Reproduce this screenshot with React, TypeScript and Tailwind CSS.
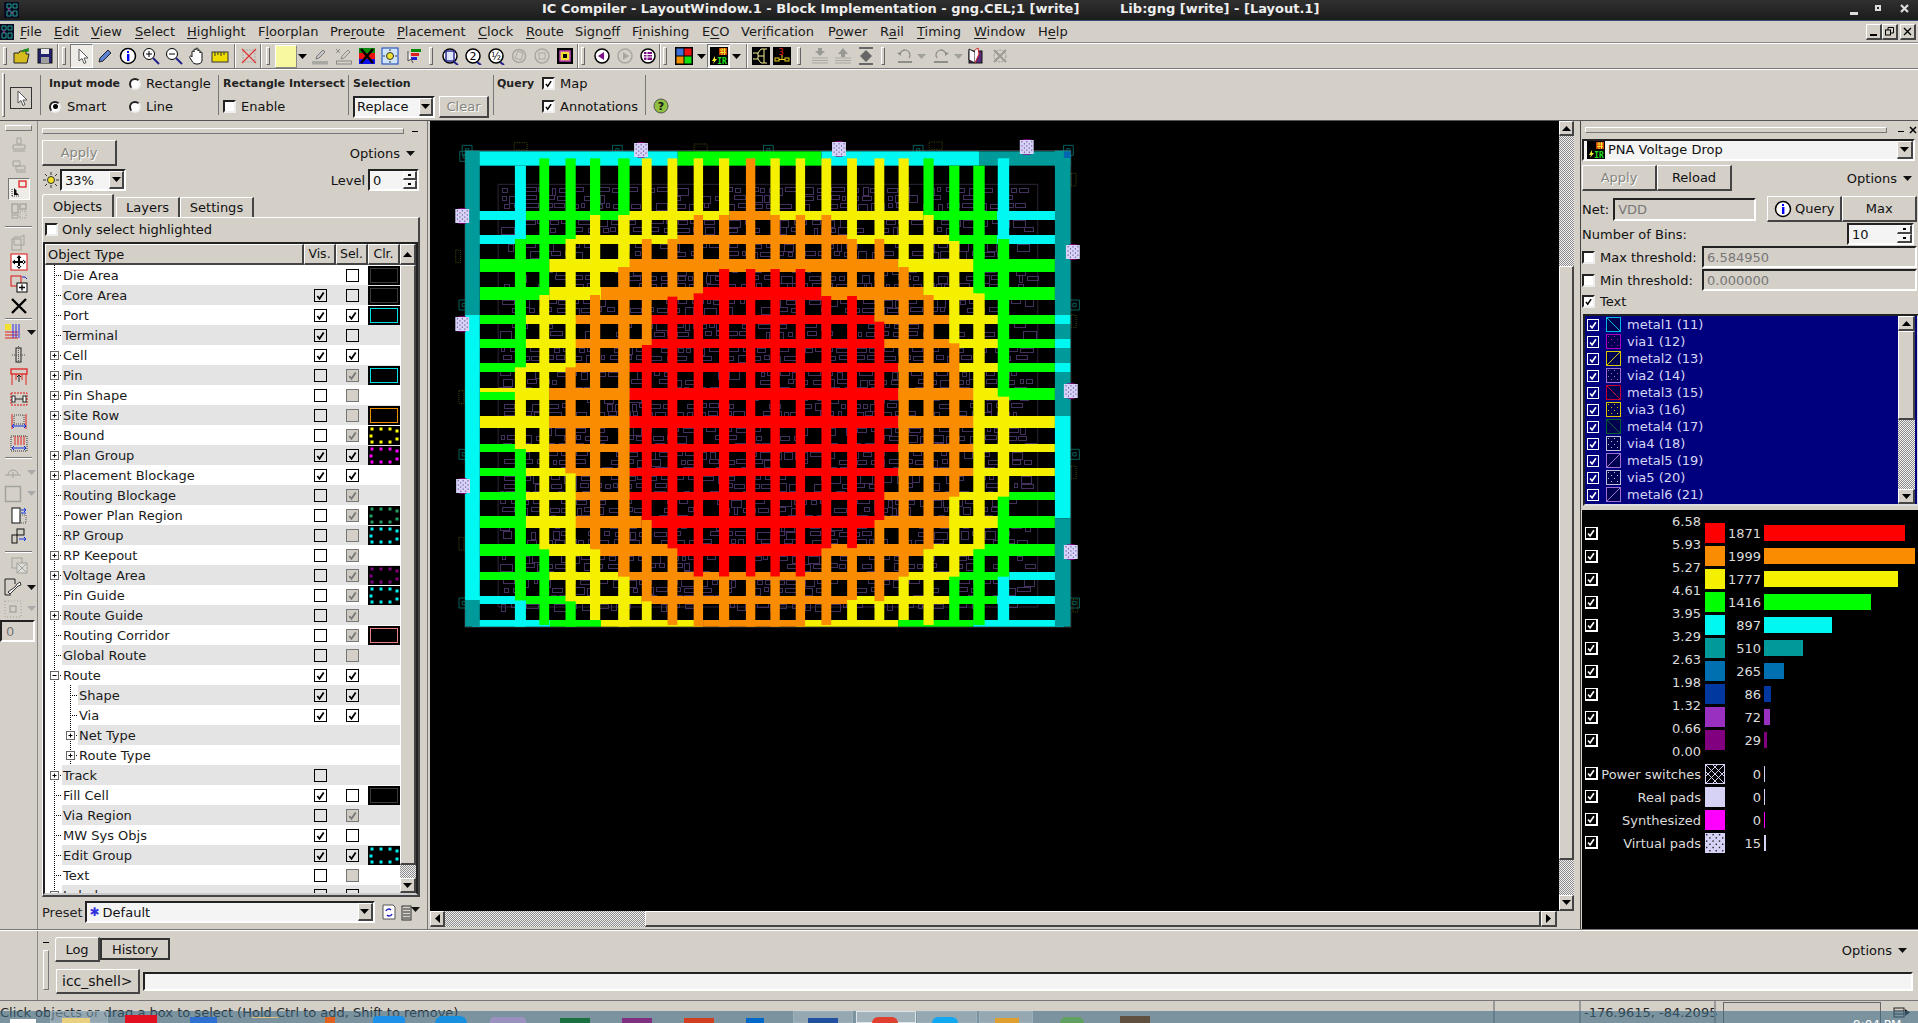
import React from "react";

const C: Record<string, string> = { C: "#00f8f2", T: "#009a9a", G: "#00ff00", Y: "#f4f000", O: "#f98c00", R: "#ff0000" };
type Wire = (string | number)[];
const HW: Wire[] = [
  [64, 107, 54, "C", 558, "G", 910, "C", 1296, "T", 1520],
  [243, 270, 54, "C", 185, "G", 435, "Y", 685, "O", 785, "Y", 1160, "G", 1340, "C", 1504],
  [315, 342, 54, "C", 185, "G", 305, "Y", 558, "O", 975, "Y", 1225, "G", 1340, "C", 1504],
  [387, 426, 73, "G", 243, "Y", 435, "O", 1098, "Y", 1290, "G", 1482],
  [471, 510, 73, "G", 243, "Y", 370, "O", 620, "R", 910, "O", 1160, "Y", 1290, "G", 1482],
  [555, 582, 73, "G", 184, "Y", 306, "O", 492, "R", 1040, "O", 1225, "Y", 1347, "G", 1482],
  [627, 654, 73, "G", 184, "Y", 306, "O", 492, "R", 1062, "O", 1225, "Y", 1347, "G", 1482],
  [699, 726, 73, "G", 184, "Y", 306, "O", 435, "R", 1098, "O", 1247, "Y", 1347, "G", 1482],
  [774, 786, 73, "Y", 160, "Y", 243, "O", 435, "R", 1098, "O", 1289, "Y", 1347, "G", 1482],
  [786, 810, 73, "G", 160, "Y", 243, "O", 435, "R", 1098, "O", 1289, "Y", 1347, "G", 1482],
  [858, 894, 73, "Y", 243, "O", 435, "R", 1098, "O", 1289, "Y", 1482],
  [942, 966, 73, "G", 160, "Y", 243, "O", 435, "R", 1098, "O", 1289, "Y", 1482],
  [1014, 1038, 73, "G", 184, "Y", 284, "O", 435, "R", 1098, "O", 1289, "Y", 1482],
  [1086, 1110, 73, "G", 184, "Y", 306, "O", 435, "R", 1062, "O", 1247, "Y", 1370, "G", 1482],
  [1158, 1194, 73, "G", 184, "Y", 306, "O", 470, "R", 1062, "O", 1225, "Y", 1347, "G", 1482],
  [1242, 1278, 73, "G", 220, "Y", 348, "O", 535, "R", 933, "O", 1160, "Y", 1285, "G", 1482],
  [1326, 1350, 73, "G", 243, "Y", 412, "O", 1120, "Y", 1247, "G", 1370, "C", 1504],
  [1398, 1422, 54, "C", 185, "G", 284, "Y", 470, "O", 975, "Y", 1225, "G", 1340, "C", 1504],
  [1470, 1490, 54, "C", 245, "G", 370, "Y", 620, "O", 848, "Y", 1098, "G", 1282, "C", 1504],
];
const VW: Wire[] = [
  [159, 186, 107, "C", 327, "G", 712, "Y", 957, "G", 1412, "C", 1490],
  [219, 243, 85, "G", 495, "Y", 1258, "G", 1485],
  [283, 308, 85, "G", 327, "Y", 712, "O", 1030, "Y", 1414, "G", 1490],
  [343, 368, 85, "G", 255, "Y", 495, "O", 1258, "Y", 1470],
  [412, 440, 85, "G", 255, "Y", 411, "O", 1340, "Y", 1490],
  [470, 494, 85, "Y", 327, "O", 645, "R", 1170, "O", 1414, "Y", 1470],
  [533, 557, 85, "Y", 327, "O", 500, "R", 1255, "O", 1485],
  [597, 620, 85, "Y", 255, "O", 490, "R", 1340, "O", 1490],
  [659, 684, 85, "Y", 255, "O", 417, "R", 1340, "O", 1490],
  [725, 748, 85, "O", 417, "R", 1340, "O", 1490],
  [785, 808, 85, "Y", 255, "O", 417, "R", 1340, "O", 1490],
  [847, 870, 85, "Y", 255, "O", 417, "R", 1340, "O", 1490],
  [910, 934, 85, "Y", 255, "O", 498, "R", 1255, "O", 1485],
  [973, 997, 85, "Y", 327, "O", 498, "R", 1255, "O", 1410, "Y", 1470],
  [1040, 1064, 85, "Y", 327, "O", 575, "R", 1170, "O", 1414, "Y", 1470],
  [1099, 1124, 85, "Y", 411, "O", 1340, "Y", 1470],
  [1160, 1185, 85, "G", 255, "Y", 495, "O", 1258, "Y", 1485],
  [1223, 1248, 107, "G", 333, "Y", 640, "O", 1100, "Y", 1340, "G", 1470],
  [1282, 1310, 107, "G", 490, "Y", 1258, "G", 1485],
  [1342, 1370, 85, "C", 327, "G", 800, "Y", 1100, "G", 1340, "C", 1470],
];
const SIDE: [number, number, number, number, string][] = [
  [37, 62, 36, 493, "T"], [37, 555, 36, 855, "C"], [37, 1410, 36, 80, "T"],
  [1482, 62, 38, 493, "T"], [1482, 555, 38, 27, "C"], [1482, 582, 38, 45, "T"], [1482, 627, 38, 27, "C"], [1482, 654, 38, 45, "T"],
  [1482, 699, 38, 27, "C"], [1482, 726, 38, 132, "T"], [1482, 858, 38, 307, "C"], [1482, 1165, 38, 325, "T"],
];

function mulberry(seed: number) {
  let a = seed;
  return () => {
    a = (a + 0x6d2b79f5) | 0;
    let t = Math.imul(a ^ (a >>> 15), 1 | a);
    t = (t + Math.imul(t ^ (t >>> 7), 61 | t)) ^ t;
    return ((t ^ (t >>> 14)) >>> 0) / 4294967296;
  };
}
const rnd = mulberry(77);
const CELLS: { x: number; y: number; w: number; h: number }[] = [];
for (let y = 172; y < 1425; y += 24) {
  let x = 122 + rnd() * 15;
  while (x < 1415) {
    const w = rnd() < 0.3 ? 8 + rnd() * 6 : 18 + rnd() * 14;
    const h = rnd() < 0.25 ? 22 : 12;
    if (rnd() < 0.75) CELLS.push({ x, y: y + rnd() * 4, w, h });
    x += w + 5 + rnd() * 10;
  }
}

const Pad = ({ x, y }: { x: number; y: number }) => {
  const d: React.ReactNode[] = [];
  for (let i = 0; i < 5; i++)
    for (let j = 0; j < 6; j++)
      if ((i + j) % 2 === 0) d.push(<rect key={`${i}-${j}`} x={x + 4 + i * 6} y={y + 4 + j * 6.2} width={2.5} height={3} fill="#3a2a6a" />);
  return (
    <g>
      <rect x={x + 8} y={y - 2} width={18} height={46} fill="#a000a0" />
      <rect x={x} y={y} width={34} height={42} fill="#d8d2f8" />
      {d}
    </g>
  );
};
const Teal = ({ x, y }: { x: number; y: number }) => (
  <g fill="none" stroke="#00605c" strokeWidth={1}>
    <rect x={x} y={y} width={24} height={30} vectorEffect="non-scaling-stroke" />
    <rect x={x + 8} y={y + 10} width={8} height={10} vectorEffect="non-scaling-stroke" />
  </g>
);
const Dots = ({ x, y, v }: { x: number; y: number; v?: boolean }) => (
  <rect x={x} y={y} width={v ? 12 : 32} height={v ? 38 : 22} fill="none" stroke="#5c5c10" strokeWidth={2} strokeDasharray="3 3" />
);

function HeatMap() {
  const out: React.ReactNode[] = [];
  HW.forEach((w, i) => {
    const [y1, y2] = w as number[];
    let x = w[2] as number;
    for (let k = 3; k < w.length; k += 2) {
      const nx = w[k + 1] as number;
      out.push(<rect key={`h${i}-${k}`} x={x} y={y1} width={nx - x} height={y2 - y1} fill={C[w[k] as string]} />);
      x = nx;
    }
  });
  SIDE.forEach((s, i) => out.push(<rect key={`s${i}`} x={s[0]} y={s[1]} width={s[2]} height={s[3]} fill={C[s[4]]} />));
  VW.forEach((w, i) => {
    const [x1, x2] = w as number[];
    let y = w[2] as number;
    for (let k = 3; k < w.length; k += 2) {
      const ny = w[k + 1] as number;
      out.push(<rect key={`v${i}-${k}`} x={x1} y={y} width={x2 - x1} height={ny - y} fill={C[w[k] as string]} />);
      y = ny;
    }
  });
  return (
    <svg width={640} height={520} viewBox="0 0 1568 1560" preserveAspectRatio="none" className="block shrink-0">
      {[[30, 46], [398, 46], [768, 46], [1135, 46], [1503, 46], [24, 64], [22, 510], [22, 958], [22, 1404], [1518, 510], [1518, 958], [1518, 1404]].map(([x, y], i) => (
        <Teal key={i} x={x} y={y} />
      ))}
      {[[157, 38], [598, 42], [1174, 36]].map(([x, y], i) => <Dots key={i} x={x} y={y} />)}
      {[[14, 360], [1522, 130], [1522, 555], [22, 782], [1522, 1008], [22, 1222], [1526, 1408]].map(([x, y], i) => <Dots key={i} x={x} y={y} v />)}
      <rect x={118} y={163} width={1322} height={1268} fill="none" stroke="#2e2338" strokeWidth={1} vectorEffect="non-scaling-stroke" />
      {CELLS.map((c, i) => (
        <rect key={i} x={c.x} y={c.y} width={c.w} height={c.h} fill="none" stroke="#44305e" strokeWidth={1} vectorEffect="non-scaling-stroke" shapeRendering="crispEdges" />
      ))}
      <rect x={37} y={62} width={1484} height={1429} fill="none" stroke="#555" strokeWidth={2} />
      {out}
      <rect x={1504} y={64} width={16} height={20} fill="#0066b0" />
      {[[451, 39], [936, 36], [1396, 30], [13, 237], [13, 561], [15, 1047], [1509, 345], [1504, 762], [1504, 1245]].map(([x, y], i) => (
        <Pad key={i} x={x} y={y} />
      ))}
    </svg>
  );
}

const Tri = ({ dir = "down", className = "" }: { dir?: "down" | "up" | "left" | "right"; className?: string }) => {
  const p = { down: "0,1 9,1 4.5,6", up: "0,6 9,6 4.5,1", left: "6,0 6,9 1,4.5", right: "1,0 1,9 6,4.5" }[dir];
  const v = dir === "left" || dir === "right";
  return (
    <svg width={v ? 7 : 9} height={v ? 9 : 7} viewBox={v ? "0 0 7 9" : "0 0 9 7"} className={`block ${className}`}>
      <polygon points={p} fill="currentColor" />
    </svg>
  );
};

const raised = "border border-t-white border-l-white border-r-[#444] border-b-[#444] border-r-2 border-b-2";
const sunken = "border-2 border-t-[#222] border-l-[#222] border-r-white border-b-white";

const ArrowBtn = ({ dir, className = "" }: { dir: "up" | "down" | "left" | "right"; className?: string }) => (
  <div className={`${raised} bg-[#d4d0c8] flex items-center justify-center text-black shrink-0 ${className}`}>
    <Tri dir={dir} />
  </div>
);
const stipple = "bg-[repeating-conic-gradient(#8c8c8c_0%_25%,#f0f0f0_0%_50%)] bg-[length:2px_2px]";

const Grip = ({ className = "h-[20px] w-[7px]" }: { className?: string }) => (
  <div className={`${className} shrink-0 flex items-center justify-center`}>
    <div className="h-[18px] w-[4px] border border-t-white border-l-white border-r-[#666] border-b-[#666]" />
  </div>
);
const HGrip = ({ className = "" }: { className?: string }) => (
  <div className={`h-[6px] border border-t-white border-l-white border-r-[#777] border-b-[#777] ${className}`} />
);

const CheckMark = ({ color = "#000" }: { color?: string }) => (
  <svg viewBox="0 0 12 12" className="w-full h-full block">
    <path d="M2.5 6.5l2.4 3L9.5 2.8" fill="none" stroke={color} strokeWidth={2} />
  </svg>
);
const Check = ({ on, className = "" }: { on?: boolean; className?: string }) => (
  <div className={`w-[13px] h-[13px] shrink-0 bg-white border-2 border-t-[#222] border-l-[#222] border-r-[#eee] border-b-[#eee] ${className}`}>
    {on && <CheckMark />}
  </div>
);
const Radio = ({ on }: { on?: boolean }) => (
  <div className="w-[12px] h-[12px] shrink-0 rounded-full bg-white border-2 border-t-[#222] border-l-[#222] border-r-[#eee] border-b-[#eee] flex items-center justify-center">
    {on && <div className="w-[5px] h-[5px] rounded-full bg-black" />}
  </div>
);

const Ico = ({ n, g }: { n: string; g?: boolean }) => {
  const s: Record<string, React.ReactNode> = {
    open: (<><path d="M1 6h5l1-2h6v3h3l-2 9H1z" fill="#d6bc1e" stroke="#222" /><path d="M9 5c2-3 4-3 6-2M15 1v3h-3" stroke="#1a8a1a" fill="none" strokeWidth={1.5} /></>),
    save: (<><rect x="2" y="2" width="14" height="14" fill="#22226e" stroke="#111" /><rect x="5" y="2" width="8" height="5" fill="#e8e8e8" /><rect x="5" y="10" width="8" height="6" fill="#a0a0a0" /></>),
    cursor: (<path d="M6 2v12l3-2.5 2 5 2-1-2-4.5h4z" fill="#fff" stroke="#555" />),
    pencil: (<><path d="M3 15l1-4 8-8 3 3-8 8z" fill="#5a82d0" stroke="#223" /></>),
    info: (<><circle cx="9" cy="9" r="7.5" fill="#fff" stroke="#000" strokeWidth={1.5} /><rect x="8" y="4" width="2" height="2" fill="#00f" /><rect x="8" y="7" width="2.4" height="7" fill="#00f" /></>),
    zin: (<><circle cx="7" cy="7" r="5.5" fill="#fff" stroke="#000" /><path d="M4 7h6M7 4v6" stroke="#000" /><path d="M11 11l6 6" stroke="#22228a" strokeWidth={2} /></>),
    zout: (<><circle cx="7" cy="7" r="5.5" fill="#fff" stroke="#000" /><path d="M4 7h6" stroke="#000" /><path d="M11 11l6 6" stroke="#22228a" strokeWidth={2} /></>),
    hand: (<path d="M4 9V5a1 1 0 012 0V3a1 1 0 012 0v-1a1 1 0 012 0v2a1 1 0 012 0v2a1 1 0 012 0v7c0 3-2 4-5 4s-4-1-5-3L2 11c-1-2 1-3 2-1z" fill="#fff" stroke="#111" />),
    ruler: (<><rect x="1" y="5" width="16" height="10" fill="#eedc00" stroke="#333" /><path d="M4 5v4M7 5v3M10 5v4M13 5v3" stroke="#333" /></>),
    xred: (<><rect x="3" y="3" width="12" height="12" fill="none" stroke="#aaa" strokeDasharray="2 1" /><path d="M2 2l14 14M16 2L2 16" stroke="#e03030" strokeWidth={1.2} /></>),
    pgray: (<><path d="M5 12l1-3 6-6 2 2-6 6z" fill="#c8c8c8" stroke="#777" /><rect x="1" y="14" width="16" height="3.5" fill="#a8a8a2" /></>),
    pline: (<><path d="M6 12l1-3 6-6 2 2-6 6z" fill="#d4d0c8" stroke="#8a8a84" /><path d="M1 2l4 4M5 2L1 6" stroke="#8a8a84" /><rect x="1.5" y="14" width="15" height="3" fill="none" stroke="#8a8a84" /></>),
    xcolor: (<><rect x="1" y="1" width="16" height="5" fill="#0a8a0a" /><rect x="1" y="6" width="8" height="6" fill="#ee1010" /><rect x="9" y="6" width="8" height="6" fill="#ee1010" /><rect x="1" y="12" width="16" height="5" fill="#1010ee" /><path d="M3 2l12 14M15 2L3 16" stroke="#000" strokeWidth={2.4} /></>),
    sunb: (<><rect x="1" y="1" width="16" height="16" fill="#cfe4f8" stroke="#1040c0" /><circle cx="9" cy="9" r="3.5" fill="#f0e030" stroke="#333" /><path d="M9 2v2M9 14v2M2 9h2M14 9h2" stroke="#333" /></>),
    flag: (<><rect x="6" y="2" width="10" height="3" fill="#0a8a0a" /><rect x="6" y="6" width="8" height="3" fill="#e02020" /><rect x="6" y="10" width="6" height="3" fill="#2020d0" /><path d="M3 4v10l3-2 2 4" fill="#fff" stroke="#444" /></>),
    z1: (<><circle cx="9" cy="9" r="7" fill="#fff" stroke="#000" strokeWidth={1.5} /><rect x="5" y="4" width="8" height="10" fill="#dfe4ff" stroke="#22228a" strokeWidth={1.4} /><path d="M13 15l4 3" stroke="#22228a" strokeWidth={2} /></>),
    z2: (<><circle cx="9" cy="9" r="7" fill="#fff" stroke="#000" strokeWidth={1.5} /><text x="9" y="13" textAnchor="middle" fontSize="11" fill="#000">2</text><path d="M13 15l4 3" stroke="#22228a" strokeWidth={2} /></>),
    z3: (<><circle cx="9" cy="9" r="7" fill="#fff" stroke="#000" strokeWidth={1.5} /><text x="9" y="13" textAnchor="middle" fontSize="10" fill="#000">½</text><path d="M13 15l4 3" stroke="#22228a" strokeWidth={2} /></>),
    zg1: (<><circle cx="9" cy="9" r="6.5" fill="none" stroke="#a8a8a2" strokeWidth={1.5} /><path d="M5 11l3-7 5 2-2 7z" fill="none" stroke="#a8a8a2" /></>),
    zg2: (<><circle cx="9" cy="9" r="7" fill="none" stroke="#a8a8a2" strokeWidth={1.5} /><rect x="6" y="6" width="6" height="6" fill="none" stroke="#a8a8a2" /></>),
    chip: (<><rect x="1" y="1" width="16" height="16" fill="#000" /><rect x="4" y="4" width="10" height="10" fill="#f0e030" stroke="#c040c0" strokeWidth={1.5} /><rect x="7" y="7" width="4" height="4" fill="#000" /></>),
    back: (<><circle cx="9" cy="9" r="7" fill="#fff" stroke="#000" strokeWidth={1.5} /><path d="M5 9l6-4v8z" fill="#80108a" /></>),
    fwd: (<><circle cx="9" cy="9" r="7" fill="none" stroke="#a8a8a2" strokeWidth={1.5} /><path d="M13 9L7 5v8z" fill="#a8a8a2" /></>),
    list: (<><circle cx="9" cy="9" r="7" fill="#fff" stroke="#000" strokeWidth={1.5} /><rect x="5" y="5" width="8" height="8" fill="#80108a" /><path d="M5 7.5h8M5 10h8M8 5v8" stroke="#fff" /></>),
    quad: (<><rect x="0" y="0" width="18" height="18" fill="#000" /><rect x="1.5" y="1.5" width="7" height="7" fill="#3a70d8" /><rect x="9.5" y="1.5" width="7" height="7" fill="#ee1010" /><rect x="1.5" y="9.5" width="7" height="7" fill="#f09000" /><rect x="9.5" y="9.5" width="7" height="7" fill="#10e010" /></>),
    ir: (<><rect x="0" y="0" width="18" height="18" fill="#000" /><rect x="9" y="1" width="8" height="7" fill="#d04000" /><path d="M10 3h6M10 5.5h6M12 1v7M14.5 1v7" stroke="#f0e030" /><path d="M5 9L2 14h2l-1 3 4-5H5z" fill="#f0f030" /><text x="12" y="17" textAnchor="middle" fontSize="8" fontWeight="700" fill="#20e020" fontFamily="DejaVu Sans Mono">IR</text></>),
    net: (<><rect x="0" y="0" width="18" height="18" fill="#000" /><path d="M1 6h5l3-4h6M1 12h5l3 4h6M6 6v6M12 2v14M6 9h6" stroke="#f0f090" fill="none" /></>),
    net3: (<><rect x="0" y="0" width="18" height="18" fill="#000" /><text x="8" y="8" textAnchor="middle" fontSize="8" fill="#f02020">3</text><rect x="2" y="11" width="4" height="3" fill="none" stroke="#f0d020" /><rect x="12" y="11" width="4" height="3" fill="none" stroke="#f0d020" /><path d="M6 12.5h6M9 8v4" stroke="#f0d020" /></>),
    dn: (<><path d="M9 9l-5-5h3V1h4v3h3z" fill="#9a9a94" /><path d="M1 11h16M1 13.5h16M1 16h16" stroke="#a8a8a2" /></>),
    up: (<><path d="M9 1l5 6h-3v3H7V7H4z" fill="#9a9a94" /><path d="M1 11h16M1 13.5h16M1 16h16" stroke="#a8a8a2" /></>),
    top: (<><rect x="2" y="0" width="14" height="2" fill="#666" /><path d="M9 3l6 6H3zM9 15l6-6H3z" fill="#666" /><rect x="2" y="16" width="14" height="2" fill="#666" /></>),
    undo: (<><path d="M4 8a5 5 0 119 3" fill="none" stroke="#8e8e88" strokeWidth={1.3} /><path d="M1 6l4-1 0 4z" fill="#8e8e88" /><path d="M2 15h14" stroke="#8e8e88" strokeWidth={2} /></>),
    redo: (<><path d="M14 8a5 5 0 10-9 3" fill="none" stroke="#8e8e88" strokeWidth={1.3} /><path d="M17 6l-4-1 0 4z" fill="#8e8e88" /><path d="M2 15h14" stroke="#8e8e88" strokeWidth={2} /></>),
    book: (<><rect x="3" y="4" width="13" height="12" fill="#5a2a7a" stroke="#111" /><path d="M3 2l6 3v11l-6-3z" fill="#fff" stroke="#111" /><path d="M9 3l3-2 1 6-4 9" fill="#fff" stroke="#d02020" /></>),
    xg: (<><circle cx="9" cy="9" r="6" fill="none" stroke="#9a9a94" strokeDasharray="2 1" /><path d="M3 3l12 12M15 3L3 15" stroke="#9a9a94" strokeWidth={2} /></>),
    stamp: (<><path d="M7 2h4v6h-4zM3 9h12v4H3zM3 15h12" fill="none" stroke="#a2a29c" /></>),
    stamp2: (<><path d="M3 3h7v5H3zM6 8h9v4H6zM6 14h10" fill="none" stroke="#a2a29c" /></>),
    sel: (<><rect x="9" y="1" width="7" height="6" fill="none" stroke="#e01010" strokeWidth={1.2} /><path d="M2 16V9M2 16h8" stroke="#333" strokeDasharray="1 1" /><path d="M4 8l3 3-1 1 3 3H4z" fill="#111" /></>),
    grid: (<><rect x="2" y="2" width="6" height="9" fill="none" stroke="#a2a29c" strokeWidth={1.3} /><rect x="10" y="2" width="6" height="5" fill="none" stroke="#a2a29c" strokeWidth={1.3} /><rect x="10" y="9" width="6" height="7" fill="none" stroke="#a2a29c" strokeDasharray="1 1" /><rect x="2" y="13" width="6" height="3" fill="none" stroke="#a2a29c" /></>),
    doc: (<><path d="M4 4h7l3-2v10H4z" fill="none" stroke="#a2a29c" /><rect x="2" y="6" width="9" height="11" fill="none" stroke="#a2a29c" /></>),
    move: (<><rect x="1" y="1" width="16" height="16" fill="#fff" stroke="#e01010" /><path d="M9 2l2.5 3h-5zM9 16l2.5-3h-5zM2 9l3-2.5v5zM16 9l-3-2.5v5zM8 4h2v10H8zM4 8h10v2H4z" fill="#000" /></>),
    add: (<><rect x="1" y="1" width="10" height="10" fill="none" stroke="#e01010" /><path d="M12 2h3l2 2" stroke="#2020d0" fill="none" /><rect x="7" y="8" width="10" height="9" fill="#fff" stroke="#000" /><path d="M9 12.5h6M12 9.5v6" stroke="#000" strokeWidth={1.3} /></>),
    x: (<path d="M2 2l14 14M16 2L2 16" stroke="#000" strokeWidth={2.4} />),
    layers: (<><rect x="1" y="1" width="6" height="6" fill="#f0e030" /><path d="M1 9h13M1 12h13M1 15h13" stroke="#e02020" /><path d="M9 1v14M12 1v14M15 1v14" stroke="#3030e0" /></>),
    cut: (<><rect x="6" y="2" width="5" height="14" fill="none" stroke="#222" /><path d="M8.5 0v18M2 9h14" stroke="#555" strokeDasharray="1 1" /></>),
    arch: (<><rect x="1" y="1" width="16" height="5" fill="none" stroke="#e02020" strokeWidth={1.3} /><path d="M2 6v11M16 6v11M6 6v6M12 6v6" stroke="#e02020" /><path d="M9 14V7M7 9l2-2 2 2" stroke="#222" fill="none" /></>),
    gap: (<><rect x="1" y="3" width="16" height="12" fill="none" stroke="#e01010" strokeDasharray="2 1" /><rect x="2" y="6" width="3" height="6" fill="#fff" stroke="#222" /><rect x="13" y="6" width="3" height="6" fill="#fff" stroke="#222" /><path d="M5 9h8" stroke="#222" /></>),
    span: (<><path d="M2 2v15M16 2v15" stroke="#e02020" /><rect x="4" y="3" width="10" height="9" fill="none" stroke="#444" strokeDasharray="1 1" /><path d="M2 14h14M4 12l-2 2 2 2M14 12l2 2-2 2" stroke="#1030e0" fill="none" /></>),
    span2: (<><rect x="1" y="2" width="16" height="15" fill="none" stroke="#333" strokeDasharray="1 1" /><path d="M5 2v9M8 2v9M11 2v9M14 2v9" stroke="#e02020" /><path d="M2 14h14M4 12l-2 2 2 2M14 12l2 2-2 2" stroke="#1030e0" fill="none" /></>),
    rot: (<><path d="M4 12a5 5 0 0110 0" fill="none" stroke="#a2a29c" /><path d="M1 12h16M9 9v6" stroke="#a2a29c" /></>),
    box: (<rect x="1.5" y="1.5" width="15" height="15" fill="none" stroke="#a2a29c" strokeWidth={1.5} />),
    rep: (<><rect x="2" y="2" width="8" height="15" fill="#fff" stroke="#111" /><rect x="10" y="9" width="6" height="8" fill="none" stroke="#555" strokeDasharray="1 1" /><path d="M11 4h5M14 2l2 2-2 2M11 7h5" stroke="#1030e0" fill="none" /></>),
    rep2: (<><rect x="7" y="1" width="7" height="6" fill="none" stroke="#111" /><rect x="2" y="7" width="5" height="8" fill="none" stroke="#111" /><path d="M9 11h7M14 9l2 2-2 2" stroke="#1030e0" fill="none" /></>),
    over: (<><rect x="2" y="2" width="10" height="10" fill="none" stroke="#a2a29c" /><rect x="7" y="7" width="10" height="10" fill="#dcdcd8" stroke="#a2a29c" /><path d="M8 8l8 8M16 8l-8 8" stroke="#a2a29c" /></>),
    wrench: (<><path d="M1 1v16M1 1h10v5M1 17h6" stroke="#222" fill="none" /><path d="M6 16l8-8 3-1-1-3-3 2-2 3-7 5z" fill="#fff" stroke="#333" /></>),
    center: (<><rect x="1" y="1" width="16" height="16" fill="none" stroke="#a2a29c" strokeDasharray="1 2" /><rect x="6" y="6" width="6" height="6" fill="none" stroke="#a2a29c" strokeWidth={1.3} /></>),
    refresh: (<><path d="M5 2h8l2 2v12H3V2z" fill="#fff" stroke="#555" /><path d="M6 8a3 3 0 015-1M12 11a3 3 0 01-5 1" stroke="#2020c0" fill="none" strokeWidth={1.4} /></>),
    menuico: (<><rect x="4" y="3" width="9" height="14" fill="none" stroke="#333" /><path d="M5 6h7M5 9h7M5 12h7M5 15h7" stroke="#333" /></>),
  };
  return (
    <svg width={18} height={18} viewBox="0 0 18 18" className={`block shrink-0 ${g ? "opacity-70" : ""}`}>
      {s[n]}
    </svg>
  );
};
const Slot = ({ n, className = "w-[23px]", active }: { n: string; className?: string; active?: boolean }) => (
  <div className={`h-[24px] flex items-center justify-center shrink-0 ${className} ${active ? "border border-t-[#777] border-l-[#777] border-r-white border-b-white bg-[#eeece6]" : ""}`}>
    <Ico n={n} />
  </div>
);
const DropArrow = ({ className = "w-[12px]", gray }: { className?: string; gray?: boolean }) => (
  <div className={`h-[24px] shrink-0 flex items-center justify-center ${gray ? "text-[#a0a09a]" : "text-black"} ${className}`}>
    <Tri />
  </div>
);
const TSep = ({ className }: { className: string }) => (
  <div className={`h-[24px] shrink-0 flex justify-center ${className}`}>
    <div className="w-[2px] h-full border-l border-l-[#777] border-r border-r-white" />
  </div>
);

const MENU: [string, string, string, string][] = [
  ["", "F", "ile", "w-[34px]"], ["", "E", "dit", "w-[37px]"], ["", "V", "iew", "w-[44px]"], ["", "S", "elect", "w-[52px]"],
  ["", "H", "ighlight", "w-[71px]"], ["F", "l", "oorplan", "w-[72px]"], ["Pre", "r", "oute", "w-[67px]"], ["", "P", "lacement", "w-[81px]"],
  ["", "C", "lock", "w-[48px]"], ["", "R", "oute", "w-[49px]"], ["Sign", "o", "ff", "w-[57px]"], ["F", "i", "nishing", "w-[70px]"],
  ["E", "C", "O", "w-[39px]"], ["Ver", "i", "fication", "w-[87px]"], ["P", "o", "wer", "w-[52px]"], ["R", "a", "il", "w-[37px]"],
  ["", "T", "iming", "w-[57px]"], ["", "W", "indow", "w-[64px]"], ["H", "e", "lp", "w-[40px]"],
];

type Row = { t: string; lvl?: number; exp?: "+" | "-"; v?: "c" | "u"; s?: "c" | "u" | "gc" | "g"; box?: string; dots?: string };
const ROWS: Row[] = [
  { t: "Die Area", s: "u", box: "#3a3a3a" },
  { t: "Core Area", v: "c", s: "u", box: "#3a3a3a" },
  { t: "Port", v: "c", s: "c", box: "#00e0e0" },
  { t: "Terminal", v: "c", s: "u" },
  { t: "Cell", exp: "+", v: "c", s: "c" },
  { t: "Pin", exp: "+", v: "u", s: "gc", box: "#00e0e0" },
  { t: "Pin Shape", exp: "+", v: "u", s: "g" },
  { t: "Site Row", exp: "+", v: "u", s: "g", box: "#f09000" },
  { t: "Bound", v: "u", s: "gc", dots: "#ffff00" },
  { t: "Plan Group", exp: "+", v: "c", s: "c", dots: "#ff00ff" },
  { t: "Placement Blockage", exp: "+", v: "c", s: "c" },
  { t: "Routing Blockage", v: "u", s: "gc" },
  { t: "Power Plan Region", v: "u", s: "gc", dots: "#20a060" },
  { t: "RP Group", v: "u", s: "g", dots: "#00f0f0" },
  { t: "RP Keepout", exp: "+", v: "u", s: "gc" },
  { t: "Voltage Area", exp: "+", v: "u", s: "gc", dots: "#800080" },
  { t: "Pin Guide", v: "u", s: "gc", dots: "#00f0f0" },
  { t: "Route Guide", exp: "+", v: "u", s: "gc" },
  { t: "Routing Corridor", v: "u", s: "gc", box: "#e88080" },
  { t: "Global Route", v: "u", s: "g" },
  { t: "Route", exp: "-", v: "c", s: "c" },
  { t: "Shape", lvl: 1, v: "c", s: "c" },
  { t: "Via", lvl: 1, v: "c", s: "c" },
  { t: "Net Type", lvl: 1, exp: "+" },
  { t: "Route Type", lvl: 1, exp: "+" },
  { t: "Track", exp: "+", v: "u" },
  { t: "Fill Cell", v: "c", s: "u", box: "#3a3a3a" },
  { t: "Via Region", v: "u", s: "gc" },
  { t: "MW Sys Objs", v: "c", s: "u" },
  { t: "Edit Group", v: "c", s: "c", dots: "#00f0f0" },
  { t: "Text", v: "u", s: "g" },
  { t: "Labels", exp: "+", v: "u", s: "u" },
];

const TreeGlyph = ({ lvl, exp }: { lvl: number; exp?: "+" | "-" }) => {
  const w = lvl ? 33 : 17;
  const cx = lvl ? 25 : 9;
  return (
    <svg width={w} height={20} viewBox={`0 0 ${w} 20`} className="block shrink-0">
      <path d="M9.5 0V20" stroke="#000" strokeDasharray="1 1" />
      {lvl ? <path d="M25.5 0V20" stroke="#000" strokeDasharray="1 1" /> : null}
      <path d={`M${cx} 10.5H${w}`} stroke="#000" strokeDasharray="1 1" />
      {exp && (
        <>
          <rect x={cx - 3.5} y={6.5} width={8} height={8} fill="#fff" stroke="#666" />
          <path d={`M${cx - 1.5} 10.5h4`} stroke="#000" />
          {exp === "+" && <path d={`M${cx + 0.5} 8.5v4`} stroke="#000" />}
        </>
      )}
    </svg>
  );
};

const SmallCheck = ({ k }: { k?: string }) => {
  if (!k) return null;
  const gray = k === "g" || k === "gc";
  return (
    <div className={`w-[13px] h-[13px] border ${gray && k === "gc" ? "border-[#777] bg-[#cfcbc3]" : gray ? "border-[#777] bg-[#d4d0c8]" : "border-black"}`}>
      {(k === "c" || k === "gc") && <CheckMark color={k === "c" ? "#000" : "#777"} />}
    </div>
  );
};
const ColorBox = ({ box, dots }: { box?: string; dots?: string }) => {
  if (box) return (
    <div className="w-[32px] h-[19px] bg-black p-[2px] ml-auto">
      <div className="w-full h-full border" style={{ borderColor: box }} />
    </div>
  );
  if (dots) {
    const pts = [[4, 3], [13, 3], [22, 3], [29, 5], [3, 10], [29, 13], [4, 16], [13, 16], [22, 16]];
    return (
      <svg width={32} height={19} viewBox="0 0 32 19" className="block ml-auto">
        <rect width={32} height={19} fill="#000" />
        {pts.map(([x, y], i) => <rect key={i} x={x - 1.5} y={y - 1.5} width={3} height={3} fill={dots} />)}
      </svg>
    );
  }
  return null;
};

function ObjectTable() {
  return (
    <div className="mt-[2px] w-[375px] h-[653px] flex flex-col bg-white border-2 border-t-[#222] border-l-[#222] border-r-[#222] border-b-[#ccc] overflow-hidden">
      <div className="flex flex-1 min-h-0">
        <div className="flex-1 min-w-0 flex flex-col overflow-hidden">
          <div className="flex h-[21px] shrink-0 bg-[#d4d0c8]">
            <div className={`flex-1 ${raised} flex items-center pl-[2px]`}>Object Type</div>
            <div className={`w-[32px] ${raised} flex items-center justify-center text-[12.5px]`}>Vis.</div>
            <div className={`w-[32px] ${raised} flex items-center justify-center text-[12.5px]`}>Sel.</div>
            <div className={`w-[32px] ${raised} flex items-center justify-center text-[12.5px]`}>Clr.</div>
          </div>
          {ROWS.map((r, i) => (
            <div key={r.t} className="flex h-[20px] shrink-0">
              <TreeGlyph lvl={r.lvl ?? 0} exp={r.exp} />
              <div className={`flex-1 flex items-center ${i % 2 ? "bg-[#e4e4e4]" : "bg-white"}`}>
                <div className="flex-1 pl-[1px] text-[#1a1a1a] whitespace-nowrap">{r.t}</div>
                <div className="w-[32px] flex justify-center"><SmallCheck k={r.v} /></div>
                <div className="w-[32px] flex justify-center"><SmallCheck k={r.s} /></div>
                <div className="w-[32px]"><ColorBox box={r.box} dots={r.dots} /></div>
              </div>
            </div>
          ))}
        </div>
        <div className="w-[16px] shrink-0 flex flex-col bg-[#d4d0c8]">
          <ArrowBtn dir="up" className="h-[21px]" />
          <div className={`${raised} h-[600px]`} />
          <div className={`flex-1 ${stipple}`} />
          <ArrowBtn dir="down" className="h-[15px]" />
        </div>
      </div>
    </div>
  );
}

const Options = ({ className = "" }: { className?: string }) => (
  <div className={`flex items-center gap-[6px] ${className}`}>
    <span>Options</span>
    <Tri />
  </div>
);

const RSep = ({ className }: { className: string }) => (
  <div className={`w-[27px] h-[2px] shrink-0 border-t border-t-[#777] border-b border-b-white ${className}`} />
);

function LeftRail() {
  return (
    <div className="w-[38px] shrink-0 border-r border-r-[#888] flex flex-col items-center">
      <HGrip className="w-[27px] mt-[4px] mb-[3px]" />
      <div className="h-[22px] flex items-center"><Ico n="stamp" /></div>
      <div className="h-[22px] flex items-center"><Ico n="stamp2" /></div>
      <div className="h-[22px] w-[22px] flex items-center justify-center bg-[#eeece6] border border-t-[#777] border-l-[#777] border-r-white border-b-white"><Ico n="sel" /></div>
      <div className="h-[22px] flex items-center"><Ico n="grid" /></div>
      <RSep className="mt-[4px] mb-[4px]" />
      <div className="h-[20px] flex items-center"><Ico n="doc" /></div>
      <div className="h-[20px] flex items-center"><Ico n="move" /></div>
      <div className="h-[24px] flex items-center"><Ico n="add" /></div>
      <div className="h-[20px] flex items-center"><Ico n="x" /></div>
      <RSep className="mt-[2px] mb-[1px]" />
      <div className="h-[22px] flex items-center gap-[5px] pl-[2px]"><Ico n="layers" /><Tri /></div>
      <div className="h-[23px] flex items-center"><Ico n="cut" /></div>
      <div className="h-[22px] flex items-center"><Ico n="arch" /></div>
      <div className="h-[22px] flex items-center"><Ico n="gap" /></div>
      <div className="h-[22px] flex items-center"><Ico n="span" /></div>
      <div className="h-[21px] flex items-center"><Ico n="span2" /></div>
      <RSep className="mt-[4px] mb-[2px]" />
      <div className="h-[22px] flex items-center gap-[5px] pl-[2px] text-[#aaa]"><Ico n="rot" /><Tri /></div>
      <div className="h-[21px] flex items-center gap-[5px] pl-[2px] text-[#aaa]"><Ico n="box" /><Tri /></div>
      <div className="h-[22px] flex items-center"><Ico n="rep" /></div>
      <div className="h-[22px] flex items-center"><Ico n="rep2" /></div>
      <RSep className="mt-[3px] mb-[1px]" />
      <div className="h-[22px] flex items-center"><Ico n="over" /></div>
      <div className="h-[22px] flex items-center gap-[5px] pl-[2px]"><Ico n="wrench" /><Tri /></div>
      <div className="h-[21px] flex items-center gap-[5px] pl-[2px] text-[#aaa]"><Ico n="center" /><Tri /></div>
      <div className={`${sunken} w-[35px] h-[22px] self-start mt-[1px] pl-[4px] flex items-center text-[#777] leading-none`}>0</div>
    </div>
  );
}

function LeftPanel() {
  return (
    <div className="w-[390px] shrink-0 pl-[4px] pr-[6px] flex flex-col border-r border-r-[#777]">
      <div className="flex items-center h-[19px] shrink-0 gap-[8px]">
        <HGrip className="w-[362px]" />
        <div className="w-[6px] h-[1px] bg-black mt-[2px]" />
      </div>
      <div className="flex items-center h-[26px] shrink-0">
        <div className={`${raised} w-[75px] h-[26px] flex items-center justify-center text-[#85857f] [text-shadow:1px_1px_0_#fff]`}>Apply</div>
        <Options className="ml-auto mr-[6px]" />
      </div>
      <div className="flex items-center h-[22px] mt-[3px] shrink-0">
        <svg width={18} height={18} viewBox="0 0 18 18" className="block shrink-0">
          <circle cx="9" cy="9" r="3.5" fill="#f0e020" stroke="#333" />
          <path d="M9 1v3M9 14v3M1 9h3M14 9h3M3 3l2 2M13 13l2 2M15 3l-2 2M3 15l2-2" stroke="#333" />
        </svg>
        <div className={`${sunken} w-[66px] h-[22px] bg-[#f4f4f4] flex items-center pl-[3px] justify-between`}>
          <span>33%</span>
          <ArrowBtn dir="down" className="w-[15px] h-[18px]" />
        </div>
        <span className="ml-auto mr-[3px]">Level</span>
        <div className={`${sunken} w-[51px] h-[22px] bg-[#f4f4f4] flex items-center pl-[3px] justify-between mr-[2px]`}>
          <span>0</span>
          <div className="flex flex-col w-[14px] h-[18px]">
            <div className={`${raised} h-[9px] flex items-center justify-center`}><div className="w-[3px] h-[2px] bg-black" /></div>
            <div className={`${raised} h-[9px] flex items-center justify-center`}><div className="w-[3px] h-[2px] bg-black" /></div>
          </div>
        </div>
      </div>
      <div className="flex items-end h-[22px] mt-[4px] shrink-0">
        <div className="w-[72px] h-[23px] border-t border-l border-t-white border-l-white border-r-2 border-r-[#444] flex items-center justify-center rounded-tl-[3px] bg-[#d4d0c8] relative z-10">Objects</div>
        <div className="ml-[2px] w-[64px] h-[20px] border-t border-l border-t-white border-l-white border-r-2 border-r-[#444] flex items-center justify-center">Layers</div>
        <div className="w-[74px] h-[20px] border-t border-l border-t-white border-l-white border-r-2 border-r-[#444] flex items-center justify-center">Settings</div>
      </div>
      <div className="w-[378px] h-[680px] shrink-0 border border-t-white border-l-white border-r-[#444] border-b-[#444] border-r-2 border-b-2">
        <div className="flex items-center h-[21px] mt-[1px] pl-[2px]">
          <Check />
          <span className="ml-[4px]">Only select highlighted</span>
        </div>
        <ObjectTable />
      </div>
      <div className="flex items-center h-[22px] mt-[4px] shrink-0">
        <span className="text-[#222] mr-[2px]">Preset</span>
        <div className={`${sunken} w-[290px] h-[22px] bg-[#f4f4f4] flex items-center pl-[3px] justify-between`}>
          <span className="flex items-center"><span className="text-[#3030e0] mr-[3px] text-[12px]">✱</span>Default</span>
          <ArrowBtn dir="down" className="w-[15px] h-[18px]" />
        </div>
        <div className="ml-[5px]"><Ico n="refresh" /></div>
        <div className="flex items-start"><Ico n="menuico" /><Tri className="-ml-[5px] mt-[3px]" /></div>
      </div>
    </div>
  );
}

const LAYERS: [string, string, string][] = [
  ["metal1 (11)", "#00b8e0", "\\"], ["via1 (12)", "#b000c0", "."], ["metal2 (13)", "#d8c800", "/"], ["via2 (14)", "#a070d0", "."],
  ["metal3 (15)", "#c00030", "\\"], ["via3 (16)", "#d8c800", "."], ["metal4 (17)", "#006030", "\\"], ["via4 (18)", "#c0c0d8", "."],
  ["metal5 (19)", "#a070d0", "/"], ["via5 (20)", "#c0c0d8", "."], ["metal6 (21)", "#a070d0", "/"],
];
const Swatch = ({ c, k }: { c: string; k: string }) => {
  const dots: React.ReactNode[] = [];
  if (k === ".") for (let i = 0; i < 4; i++) for (let j = 0; j < 4; j++) if ((i + j) % 2 === 0) dots.push(<rect key={`${i}${j}`} x={2 + i * 3} y={2 + j * 3} width={1} height={1} fill={c} />);
  return (
    <svg width={15} height={15} viewBox="0 0 15 15" className="block shrink-0">
      <rect x={0.5} y={0.5} width={14} height={14} fill="#000050" stroke={c} />
      {k === "\\" && <path d="M1 1l13 13" stroke={c} />}
      {k === "/" && <path d="M14 1L1 14" stroke={c} />}
      {dots}
    </svg>
  );
};

const BINS: [string, number, string][] = [
  ["1871", 141, "#ff0000"], ["1999", 151, "#f98c00"], ["1777", 134, "#f4f000"], ["1416", 107, "#00ff00"], ["897", 68, "#00f8f2"],
  ["510", 39, "#009a9a"], ["265", 20, "#0070b0"], ["86", 7, "#0038a0"], ["72", 6, "#9a30c0"], ["29", 3, "#800080"],
];
const VOLTS = ["6.58", "5.93", "5.27", "4.61", "3.95", "3.29", "2.63", "1.98", "1.32", "0.66", "0.00"];
const HistCheck = ({ className = "" }: { className?: string }) => (
  <div className={`w-[13px] h-[13px] border border-white border-r-2 border-b-2 shrink-0 ${className}`}>
    <CheckMark color="#fff" />
  </div>
);
const PW = ({ k }: { k: string }) => (
  <svg width={20} height={20} viewBox="0 0 20 20" className="block shrink-0">
    <rect width={20} height={20} fill={k === "p" ? "#000" : k === "r" ? "#d6d2f6" : k === "s" ? "#ff00ff" : "#d6d2f6"} />
    {k === "p" && <path d="M0 0l20 20M20 0L0 20M0 7l13 13M7 0l13 13M13 0L0 13M20 7L7 20" stroke="#d6d2f6" strokeWidth={1} fill="none" />}
    {k === "p" && <rect x={0.5} y={0.5} width={19} height={19} fill="none" stroke="#d6d2f6" />}
    {k === "v" && [0, 1, 2, 3, 4, 5].map((i) => [0, 1, 2, 3, 4, 5].map((j) => ((i + j) % 2 === 0 ? <rect key={`${i}${j}`} x={1 + i * 3.2} y={1 + j * 3.2} width={1.4} height={1.4} fill="#222" /> : null)))}
  </svg>
);

function Histogram() {
  return (
    <div className="flex-1 min-h-0 bg-black mt-[4px] text-[#dcdcdc] flex overflow-hidden">
      <div className="w-[18px] shrink-0 flex flex-col pl-[3px] pt-[17px] gap-[10px]">
        {BINS.map((b) => <HistCheck key={b[0]} />)}
        <HistCheck className="mt-[10px]" />
        <HistCheck /><HistCheck /><HistCheck />
      </div>
      <div className="w-[101px] shrink-0 flex flex-col items-end">
        {VOLTS.map((v) => (
          <div key={v} className="h-[23px] flex items-center shrink-0">{v}</div>
        ))}
        {["Power switches", "Real pads", "Synthesized", "Virtual pads"].map((v) => (
          <div key={v} className="h-[23px] flex items-center shrink-0 whitespace-nowrap">{v}</div>
        ))}
      </div>
      <div className="flex flex-col pt-[13px] pl-[4px] w-[24px] shrink-0 gap-[3px]">
        {BINS.map((b) => <div key={b[0]} className="w-[20px] h-[20px] shrink-0" style={{ backgroundColor: b[2] }} />)}
        <div className="h-[0px] mt-[8px]" />
        <PW k="p" /><PW k="r" /><PW k="s" /><PW k="v" />
      </div>
      <div className="flex flex-col pt-[15px] shrink-0 flex-1">
        {BINS.map((b) => (
          <div key={b[0]} className="h-[23px] shrink-0 flex items-start">
            <div className="w-[37px] text-right pr-[1px] leading-none mt-[2px]">{b[0]}</div>
            <div className="ml-[2px] h-[16px]" style={{ width: b[1], backgroundColor: b[2] }} />
          </div>
        ))}
        <div className="h-[11px] shrink-0" />
        {[["0", 1, "#d6d2f6"], ["0", 1, "#d6d2f6"], ["0", 1, "#ff00ff"], ["15", 2, "#d6d2f6"]].map((b, i) => (
          <div key={i} className="h-[23px] shrink-0 flex items-start">
            <div className="w-[37px] text-right pr-[1px] leading-none mt-[2px]">{b[0]}</div>
            <div className="ml-[2px] h-[16px]" style={{ width: b[1] as number, backgroundColor: b[2] as string }} />
          </div>
        ))}
      </div>
    </div>
  );
}

function RightPanel() {
  return (
    <div className="w-[338px] shrink-0 flex flex-col pl-[1px] border-l border-l-[#444] ml-auto">
      <div className="flex items-center h-[18px] shrink-0 pl-[3px]">
        <HGrip className="w-[302px]" />
        <div className="w-[6px] h-[1px] bg-black ml-[11px] mt-[3px]" />
        <svg width={8} height={8} viewBox="0 0 8 8" className="ml-[5px] block"><path d="M1 1l6 6M7 1L1 7" stroke="#000" strokeWidth={1.5} /></svg>
      </div>
      <div className={`${sunken} w-[333px] h-[22px] bg-[#f4f4f4] flex items-center pl-[3px] justify-between shrink-0`}>
        <span className="flex items-center gap-[3px]"><Ico n="ir" /><span className="-mt-[1px]">PNA Voltage Drop</span></span>
        <ArrowBtn dir="down" className="w-[16px] h-[18px]" />
      </div>
      <div className="flex items-center h-[26px] mt-[4px] shrink-0">
        <div className={`${raised} w-[75px] h-[26px] flex items-center justify-center text-[#85857f] [text-shadow:1px_1px_0_#fff]`}>Apply</div>
        <div className={`${raised} w-[75px] h-[26px] flex items-center justify-center`}>Reload</div>
        <Options className="ml-auto mr-[6px]" />
      </div>
      <div className="flex items-center h-[26px] mt-[5px] shrink-0">
        <span>Net:</span>
        <div className={`${sunken} ml-[4px] w-[143px] h-[23px] flex items-center pl-[3px] text-[#777]`}>VDD</div>
        <div className={`${raised} ml-[11px] w-[75px] h-[26px] flex items-center justify-center gap-[3px]`}>
          <Ico n="info" />
          <span>Query</span>
        </div>
        <div className={`${raised} w-[75px] h-[26px] flex items-center justify-center`}>Max</div>
      </div>
      <div className="flex items-center h-[22px] mt-[1px] shrink-0">
        <span>Number of Bins:</span>
        <div className={`${sunken} ml-auto mr-[4px] w-[67px] h-[22px] bg-[#f4f4f4] flex items-center pl-[3px] justify-between`}>
          <span>10</span>
          <div className="flex flex-col w-[15px] h-[18px]">
            <div className={`${raised} h-[9px] flex items-center justify-center`}><div className="w-[3px] h-[2px] bg-black" /></div>
            <div className={`${raised} h-[9px] flex items-center justify-center`}><div className="w-[3px] h-[2px] bg-black" /></div>
          </div>
        </div>
      </div>
      {[["Max threshold:", "6.584950", "mt-[1px]"], ["Min threshold:", "0.000000", "mt-[1px]"]].map(([l, v, m]) => (
        <div key={l} className={`flex items-center h-[22px] shrink-0 ${m}`}>
          <Check />
          <span className="ml-[5px] w-[102px]">{l}</span>
          <div className={`${sunken} w-[215px] h-[22px] flex items-center pl-[3px] text-[#777]`}>{v}</div>
        </div>
      ))}
      <div className="flex items-center h-[21px] shrink-0">
        <Check on />
        <span className="ml-[5px]">Text</span>
      </div>
      <div className="w-[336px] h-[192px] shrink-0 ml-[1px] bg-[#00007f] border-2 border-t-[#222] border-l-[#222] border-r-[#ddd] border-b-[#ddd] flex mt-[2px]">
        <div className="flex-1 pl-[2px] flex flex-col">
          {LAYERS.map(([t, c, k]) => (
            <div key={t} className="h-[17px] flex items-center shrink-0">
              <div className="w-[12px] h-[12px] border border-white shrink-0"><CheckMark color="#fff" /></div>
              <div className="ml-[7px]"><Swatch c={c} k={k} /></div>
              <span className="ml-[6px] text-[#d6d6f4]">{t}</span>
            </div>
          ))}
        </div>
        <div className="w-[17px] shrink-0 flex flex-col bg-[#d4d0c8] mr-[2px]">
          <ArrowBtn dir="up" className="h-[15px]" />
          <div className={`${raised} h-[89px]`} />
          <div className={`flex-1 ${stipple}`} />
          <ArrowBtn dir="down" className="h-[15px]" />
        </div>
      </div>
      <Histogram />
    </div>
  );
}

export default function App() {
  return (
    <div className="relative w-[1918px] h-[1023px] overflow-hidden bg-[#d4d0c8] text-[13px] leading-none text-[#111] flex flex-col [font-family:'DejaVu_Sans',sans-serif]">
      {/* title bar */}
      <div className="h-[21px] shrink-0 bg-gradient-to-b from-[#303030] to-[#1c1c1c] border-b border-b-[#34506e] flex items-center text-[#eee] font-bold">
        <svg width={15} height={16} viewBox="0 0 15 16" className="ml-[4px] block"><rect width={15} height={16} fill="#0a0a20" /><path d="M3 2h4v4H3zM9 2h4v4H9zM3 9h4v5H3zM9 9h4v5H9z" fill="none" stroke="#20a090" /><path d="M5 6v3M9 11H7" stroke="#d040c0" /></svg>
        <span className="ml-[523px] -mt-[3px] whitespace-pre">{"IC Compiler - LayoutWindow.1 - Block Implementation - gng.CEL;1 [write]         Lib:gng [write] - [Layout.1]"}</span>
        <div className="ml-auto flex items-center pr-[9px]">
          <div className="w-[8px] h-[3px] bg-[#ddd] mt-[6px]" />
          <div className="ml-[17px] w-[6px] h-[6px] border-2 border-[#ddd] -mt-[4px]" />
          <svg width={9} height={9} viewBox="0 0 9 9" className="ml-[19px] block -mt-[4px]"><path d="M1 1l7 7M8 1L1 8" stroke="#ddd" strokeWidth={2.2} /></svg>
        </div>
      </div>
      {/* menu */}
      <div className="h-[22px] shrink-0 flex items-center border-b border-b-[#888]">
        <svg width={14} height={16} viewBox="0 0 14 16" className="block mr-[6px] shrink-0"><rect width={14} height={16} fill="#0a0a20" /><path d="M2 2h4v4H2zM8 2h4v4H8zM2 9h4v5H2zM8 9h4v5H8z" fill="none" stroke="#20a090" /><path d="M4 6v3" stroke="#d040c0" /></svg>
        {MENU.map(([a, u, b, w]) => (
          <div key={a + u + b} className={`${w} shrink-0 whitespace-nowrap text-[#1a1a1a]`}>
            {a}<span className="underline underline-offset-2">{u}</span>{b}
          </div>
        ))}
        <div className="ml-auto flex mr-[2px]">
          <div className={`${raised} w-[16px] h-[16px] flex items-end justify-center pb-[2px]`}><div className="w-[7px] h-[2px] bg-black" /></div>
          <div className={`${raised} w-[16px] h-[16px] flex items-center justify-center`}><svg width={9} height={9} viewBox="0 0 9 9" className="block"><rect x={0.5} y={3} width={5} height={5} fill="none" stroke="#000" /><path d="M3 3V.5h5.5V6H5.5" fill="none" stroke="#000" /></svg></div>
          <div className={`${raised} ml-[2px] w-[16px] h-[16px] flex items-center justify-center`}><svg width={9} height={9} viewBox="0 0 9 9" className="block"><path d="M1 1l7 7M8 1L1 8" stroke="#000" strokeWidth={1.4} /></svg></div>
        </div>
      </div>
      {/* toolbar */}
      <div className="h-[26px] shrink-0 flex items-center border-t border-t-white border-b border-b-[#777]">
        <Grip className="w-[10px] h-[20px]" />
        <Slot n="open" /><Slot n="save" />
        <TSep className="w-[4px]" />
        <Grip />
        <Slot n="cursor" className="w-[23px] ml-[3px]" active />
        <Slot n="pencil" /><Slot n="info" /><Slot n="zin" /><Slot n="zout" /><Slot n="hand" /><Slot n="ruler" />
        <TSep className="w-[8px]" />
        <Slot n="xred" className="w-[19px]" />
        <TSep className="w-[6px]" />
        <Grip />
        <div className="ml-[4px] w-[22px] h-[23px] bg-[#f8f8a0] border border-t-white border-l-white border-r-[#888] border-b-[#888] shrink-0" />
        <DropArrow className="w-[11px]" />
        <Slot n="pgray" className="w-[24px]" /><Slot n="pline" /><Slot n="xcolor" /><Slot n="sunb" /><Slot n="flag" className="w-[26px]" />
        <Grip />
        <Slot n="z1" className="w-[23px] ml-[4px]" /><Slot n="z2" /><Slot n="z3" /><Slot n="zg1" /><Slot n="zg2" /><Slot n="chip" />
        <TSep className="w-[3px]" />
        <Grip />
        <Slot n="back" className="w-[23px] ml-[4px]" /><Slot n="fwd" /><Slot n="list" />
        <TSep className="w-[2px]" />
        <Grip />
        <Slot n="quad" className="w-[23px] ml-[4px]" />
        <DropArrow />
        <Slot n="ir" className="w-[23px]" active />
        <DropArrow />
        <TSep className="w-[9px]" />
        <Slot n="net" className="w-[20px]" /><Slot n="net3" className="w-[22px]" />
        <Grip className="w-[11px] h-[20px]" />
        <Slot n="dn" className="w-[23px] ml-[4px]" /><Slot n="up" /><Slot n="top" />
        <Grip className="w-[11px] h-[20px]" />
        <Slot n="undo" className="w-[22px] ml-[6px]" />
        <DropArrow className="w-[10px]" gray />
        <Slot n="redo" className="w-[22px] ml-[4px]" />
        <DropArrow gray />
        <Slot n="book" className="w-[22px]" />
        <Slot n="xg" className="w-[22px] ml-[3px]" />
      </div>
      {/* mode toolbar */}
      <div className="h-[52px] shrink-0 flex border-b border-b-[#555] border-t border-t-white">
        <div className="w-[6px] flex justify-center items-center"><div className="w-[3px] h-[44px] border border-t-white border-l-white border-r-[#666] border-b-[#666]" /></div>
        <div className="w-[35px] shrink-0 flex items-center pl-[4px] border-r border-r-[#777] my-[5px]">
          <div className="w-[22px] h-[22px] mt-[6px] border border-[#333] flex items-center justify-center"><Ico n="cursor" /></div>
        </div>
        <div className="w-[178px] shrink-0 border-r border-r-[#777] my-[5px]">
          <div className="-mt-[3px] h-[46px] grid grid-cols-[80px_1fr] grid-rows-2 pl-[8px]">
            <div className="flex items-center font-bold text-[11px] text-[#222]">Input mode</div>
            <div className="flex items-center gap-[5px]"><Radio /><span>Rectangle</span></div>
            <div className="flex items-center gap-[6px]"><Radio on /><span>Smart</span></div>
            <div className="flex items-center gap-[5px]"><Radio /><span>Line</span></div>
          </div>
        </div>
        <div className="w-[130px] shrink-0 border-r border-r-[#777] my-[5px]">
          <div className="-mt-[3px] h-[46px] grid grid-rows-2 pl-[4px]">
            <div className="flex items-center font-bold text-[11px] text-[#222] whitespace-nowrap">Rectangle Intersect</div>
            <div className="flex items-center gap-[5px]"><Check /><span>Enable</span></div>
          </div>
        </div>
        <div className="w-[145px] shrink-0 border-r border-r-[#777] my-[5px]">
          <div className="-mt-[3px] h-[46px] grid grid-rows-2 pl-[4px]">
            <div className="flex items-center font-bold text-[11px] text-[#222]">Selection</div>
            <div className="flex items-center gap-[4px]">
              <div className={`${sunken} w-[82px] h-[22px] bg-[#f4f4f4] flex items-center pl-[2px] justify-between`}>
                <span>Replace</span>
                <ArrowBtn dir="down" className="w-[14px] h-[18px]" />
              </div>
              <div className={`${raised} w-[50px] h-[22px] flex items-center justify-center text-[#85857f] [text-shadow:1px_1px_0_#fff]`}>Clear</div>
            </div>
          </div>
        </div>
        <div className="w-[152px] shrink-0 border-r border-r-[#777] my-[5px]">
          <div className="-mt-[3px] h-[46px] grid grid-cols-[45px_1fr] grid-rows-2 pl-[3px]">
            <div className="flex items-center font-bold text-[11px] text-[#222]">Query</div>
            <div className="flex items-center gap-[5px]"><Check on /><span>Map</span></div>
            <div />
            <div className="flex items-center gap-[5px]"><Check on /><span>Annotations</span></div>
          </div>
        </div>
        <div className="flex items-end pb-[6px] pl-[7px]">
          <svg width={16} height={16} viewBox="0 0 16 16" className="block">
            <circle cx="8" cy="8" r="7" fill="#90c040" stroke="#555" />
            <text x="8" y="12" textAnchor="middle" fontSize="11" fontWeight="700" fill="#111">?</text>
          </svg>
        </div>
      </div>
      {/* main */}
      <div className="h-[809px] shrink-0 flex border-b border-b-[#777]">
        <LeftRail />
        <LeftPanel />
        <div className="w-[1131px] shrink-0 flex flex-col pl-[2px]">
          <div className="flex h-[790px]">
            <div className="w-[1129px] bg-black pl-[20px] pt-[9px] overflow-hidden"><HeatMap /></div>
          </div>
          <div className="flex h-[16px] shrink-0 mr-[2px]">
            <ArrowBtn dir="left" className="w-[15px]" />
            <div className={`w-[200px] ${stipple}`} />
            <div className={`${raised} flex-1`} />
            <ArrowBtn dir="right" className="w-[16px]" />
          </div>
        </div>
        <div className="w-[15px] shrink-0 flex flex-col h-[790px]">
          <ArrowBtn dir="up" className="h-[15px]" />
          <div className={`h-[130px] ${stipple}`} />
          <div className={`${raised} h-[594px]`} />
          <div className={`flex-1 ${stipple}`} />
          <ArrowBtn dir="down" className="h-[16px]" />
        </div>
        <RightPanel />
      </div>
      {/* bottom panel */}
      <div className="h-[70px] shrink-0 flex border-t border-t-white">
        <div className="w-[38px] shrink-0 border-r border-r-[#888]" />
        <div className="w-[16px] shrink-0 flex flex-col items-center pt-[11px]">
          <div className="w-[6px] h-[1px] bg-black mb-[7px]" />
          <div className="w-[6px] h-[40px] border border-t-white border-l-white border-r-[#777] border-b-[#777]" />
        </div>
        <div className="flex-1 flex flex-col pl-[1px] pr-[5px]">
          <div className="flex h-[35px] shrink-0 items-start pt-[6px]">
            <div className="w-[45px] h-[25px] border-t border-l border-r-2 border-b-2 border-t-white border-l-white border-r-[#444] border-b-[#444] flex items-center justify-center rounded-tl-[3px]">Log</div>
            <div className="mt-[1px] w-[70px] h-[22px] border-2 border-[#333] flex items-center justify-center">History</div>
            <Options className="ml-auto mr-[6px] mt-[7px]" />
          </div>
          <div className="flex items-center h-[30px] shrink-0">
            <div className={`${raised} ml-[1px] w-[84px] h-[25px] flex items-center pl-[5px] text-[14px]`}>icc_shell&gt;</div>
            <div className="ml-[3px] flex-1 h-[19px] bg-[#f4f4f4] border-2 border-t-[#222] border-l-[#222] border-r-white border-b-white" />
          </div>
        </div>
      </div>
      {/* status */}
      <div className="flex-1 border-t border-t-[#777] flex items-start">
        <span className="mt-[5px] whitespace-nowrap text-[#222]">Click objects or drag a box to select (Hold Ctrl to add, Shift to remove)</span>
        <div className="ml-auto flex items-start h-full">
          <div className="w-[86px] h-full border-l-2 border-l-[#999]" />
          <div className="w-[135px] h-full border-l-2 border-l-[#999] text-[#222] pl-[3px] pt-[5px] whitespace-nowrap">-176.9615, -84.2095</div>
          <div className="w-[167px] h-full border-l-2 border-l-[#999] pl-[7px] pt-[1px]"><div className="w-[158px] h-full border-t border-l border-r border-[#666]" /></div>
          <div className="w-[37px] pl-[12px] pt-[6px]">
            <svg width={18} height={11} viewBox="0 0 18 11" className="block"><rect x={1} y={1} width={10} height={9} fill="#d4d0c8" stroke="#222" /><path d="M1 4h10M1 7h10" stroke="#222" /><path d="M12 2l5 3.5-5 3.5z" fill="#222" /></svg>
          </div>
        </div>
      </div>
      {/* desktop taskbar overlapping the window */}
      <div className="absolute left-0 right-0 top-[1011px] h-[12px] bg-[#3f6b84]/60 overflow-hidden">
        <div className="absolute left-[10px] top-[8px] w-[26px] h-[4px] bg-white" />
        <div className="absolute left-[50px] top-0 w-[58px] h-[12px] bg-white/20 border border-[#9cb0bc]" />
        <div className="absolute left-[62px] top-[7px] w-[28px] h-[5px] bg-[#e8d080]" />
        <div className="absolute left-[125px] top-[4px] w-[32px] h-[8px] bg-[#e01020]" />
        <div className="absolute left-[190px] top-[6px] w-[27px] h-[6px] bg-[#3070d0]" />
        <div className="absolute left-[252px] top-[6px] w-[26px] h-[6px] border-t border-[#e0c080]" />
        <div className="absolute left-[325px] top-[6px] w-[10px] h-[6px] bg-[#e06020]" />
        <div className="absolute left-[373px] top-[5px] w-[32px] h-[7px] rounded-t-[4px] bg-[#1e90e8]" />
        <div className="absolute left-[435px] top-[5px] w-[32px] h-[7px] rounded-t-[10px] bg-[#1890e0]" />
        <div className="absolute left-[490px] top-[6px] w-[36px] h-[6px] rounded-t-[4px] bg-[#9a90c0]" />
        <div className="absolute left-[560px] top-[7px] w-[30px] h-[5px] bg-[#1a7040]" />
        <div className="absolute left-[622px] top-[7px] w-[30px] h-[5px] bg-[#803080]" />
        <div className="absolute left-[684px] top-[7px] w-[30px] h-[5px] bg-[#d04020]" />
        <div className="absolute left-[746px] top-[7px] w-[18px] h-[5px] bg-[#0068c8]" />
        <div className="absolute left-[793px] top-0 w-[60px] h-[12px] bg-white/20 border border-[#9cb0bc]" />
        <div className="absolute left-[808px] top-[7px] w-[30px] h-[5px] bg-[#2050a0]" />
        <div className="absolute left-[856px] top-0 w-[60px] h-[12px] bg-white/30 border border-[#dfe6ea]" />
        <div className="absolute left-[872px] top-[6px] w-[26px] h-[6px] rounded-t-[12px] bg-[#e04030]" />
        <div className="absolute left-[917px] top-0 w-[60px] h-[12px] bg-white/20 border border-[#9cb0bc]" />
        <div className="absolute left-[932px] top-[6px] w-[26px] h-[6px] rounded-t-[12px] bg-[#10a8f0]" />
        <div className="absolute left-[979px] top-0 w-[54px] h-[12px] bg-white/20 border border-[#9cb0bc]" />
        <div className="absolute left-[995px] top-[7px] w-[24px] h-[5px] bg-[#e0a030]" />
        <div className="absolute left-[1060px] top-[6px] w-[24px] h-[6px] rounded-t-[12px] bg-[#60a060]" />
        <div className="absolute left-[1120px] top-[5px] w-[30px] h-[7px] bg-[#605040]" />
        <div className="absolute left-[1853px] top-[8px] text-[12px] text-white leading-none whitespace-nowrap">9:04 PM</div>
      </div>
    </div>
  );
}
